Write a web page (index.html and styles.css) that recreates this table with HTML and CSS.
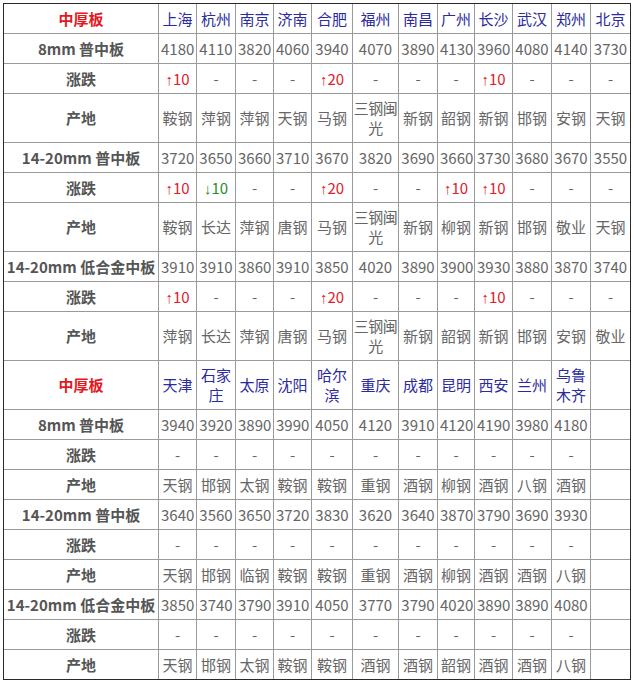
FILE: index.html
```html
<!DOCTYPE html>
<html lang="zh-CN">
<head>
<meta charset="utf-8">
<title>中厚板价格</title>
<link rel="stylesheet" href="styles.css">
</head>
<body>
<table class="price">
<colgroup>
<col class="w155"><col class="w38"><col class="w39"><col class="w38"><col class="w38"><col class="w41"><col class="w46"><col class="w39"><col class="w37"><col class="w38"><col class="w39"><col class="w39"><col class="w39">
</colgroup>
<tbody>
<tr><td class="hd">中厚板</td><td class="city">上海</td><td class="city">杭州</td><td class="city">南京</td><td class="city">济南</td><td class="city">合肥</td><td class="city">福州</td><td class="city">南昌</td><td class="city">广州</td><td class="city">长沙</td><td class="city">武汉</td><td class="city">郑州</td><td class="city">北京</td></tr>
<tr><td class="lbl">8mm 普中板</td><td>4180</td><td>4110</td><td>3820</td><td>4060</td><td>3940</td><td>4070</td><td>3890</td><td>4130</td><td>3960</td><td>4080</td><td>4140</td><td>3730</td></tr>
<tr><td class="lbl">涨跌</td><td class="up"><span class="ar">↑</span>10</td><td>-</td><td>-</td><td>-</td><td class="up"><span class="ar">↑</span>20</td><td>-</td><td>-</td><td>-</td><td class="up"><span class="ar">↑</span>10</td><td>-</td><td>-</td><td>-</td></tr>
<tr class="tall"><td class="lbl">产地</td><td>鞍钢</td><td>萍钢</td><td>萍钢</td><td>天钢</td><td>马钢</td><td class="tight">三钢闽<br>光</td><td>新钢</td><td>韶钢</td><td>新钢</td><td>邯钢</td><td>安钢</td><td>天钢</td></tr>
<tr><td class="lbl">14-20mm 普中板</td><td>3720</td><td>3650</td><td>3660</td><td>3710</td><td>3670</td><td>3820</td><td>3690</td><td>3660</td><td>3730</td><td>3680</td><td>3670</td><td>3550</td></tr>
<tr><td class="lbl">涨跌</td><td class="up"><span class="ar">↑</span>10</td><td class="down"><span class="ar">↓</span>10</td><td>-</td><td>-</td><td class="up"><span class="ar">↑</span>20</td><td>-</td><td>-</td><td class="up"><span class="ar">↑</span>10</td><td class="up"><span class="ar">↑</span>10</td><td>-</td><td>-</td><td>-</td></tr>
<tr class="tall"><td class="lbl">产地</td><td>鞍钢</td><td>长达</td><td>萍钢</td><td>唐钢</td><td>马钢</td><td class="tight">三钢闽<br>光</td><td>新钢</td><td>柳钢</td><td>新钢</td><td>邯钢</td><td>敬业</td><td>天钢</td></tr>
<tr><td class="lbl">14-20mm 低合金中板</td><td>3910</td><td>3910</td><td>3860</td><td>3910</td><td>3850</td><td>4020</td><td>3890</td><td>3900</td><td>3930</td><td>3880</td><td>3870</td><td>3740</td></tr>
<tr><td class="lbl">涨跌</td><td class="up"><span class="ar">↑</span>10</td><td>-</td><td>-</td><td>-</td><td class="up"><span class="ar">↑</span>20</td><td>-</td><td>-</td><td>-</td><td class="up"><span class="ar">↑</span>10</td><td>-</td><td>-</td><td>-</td></tr>
<tr class="tall"><td class="lbl">产地</td><td>萍钢</td><td>长达</td><td>萍钢</td><td>唐钢</td><td>马钢</td><td class="tight">三钢闽<br>光</td><td>新钢</td><td>韶钢</td><td>新钢</td><td>邯钢</td><td>安钢</td><td>敬业</td></tr>
<tr class="tall"><td class="hd">中厚板</td><td class="city">天津</td><td class="city">石家<br>庄</td><td class="city">太原</td><td class="city">沈阳</td><td class="city">哈尔<br>滨</td><td class="city">重庆</td><td class="city">成都</td><td class="city">昆明</td><td class="city">西安</td><td class="city">兰州</td><td class="city">乌鲁<br>木齐</td><td></td></tr>
<tr><td class="lbl">8mm 普中板</td><td>3940</td><td>3920</td><td>3890</td><td>3990</td><td>4050</td><td>4120</td><td>3910</td><td>4120</td><td>4190</td><td>3980</td><td>4180</td><td></td></tr>
<tr><td class="lbl">涨跌</td><td>-</td><td>-</td><td>-</td><td>-</td><td>-</td><td>-</td><td>-</td><td>-</td><td>-</td><td>-</td><td>-</td><td></td></tr>
<tr><td class="lbl">产地</td><td>天钢</td><td>邯钢</td><td>太钢</td><td>鞍钢</td><td>鞍钢</td><td>重钢</td><td>酒钢</td><td>柳钢</td><td>酒钢</td><td>八钢</td><td>酒钢</td><td></td></tr>
<tr><td class="lbl">14-20mm 普中板</td><td>3640</td><td>3560</td><td>3650</td><td>3720</td><td>3830</td><td>3620</td><td>3640</td><td>3870</td><td>3790</td><td>3690</td><td>3930</td><td></td></tr>
<tr><td class="lbl">涨跌</td><td>-</td><td>-</td><td>-</td><td>-</td><td>-</td><td>-</td><td>-</td><td>-</td><td>-</td><td>-</td><td>-</td><td></td></tr>
<tr><td class="lbl">产地</td><td>天钢</td><td>邯钢</td><td>临钢</td><td>鞍钢</td><td>鞍钢</td><td>重钢</td><td>酒钢</td><td>柳钢</td><td>酒钢</td><td>酒钢</td><td>八钢</td><td></td></tr>
<tr><td class="lbl">14-20mm 低合金中板</td><td>3850</td><td>3740</td><td>3790</td><td>3910</td><td>4050</td><td>3770</td><td>3790</td><td>4020</td><td>3890</td><td>3890</td><td>4080</td><td></td></tr>
<tr><td class="lbl">涨跌</td><td>-</td><td>-</td><td>-</td><td>-</td><td>-</td><td>-</td><td>-</td><td>-</td><td>-</td><td>-</td><td>-</td><td></td></tr>
<tr><td class="lbl">产地</td><td>天钢</td><td>邯钢</td><td>太钢</td><td>鞍钢</td><td>鞍钢</td><td>酒钢</td><td>酒钢</td><td>韶钢</td><td>酒钢</td><td>酒钢</td><td>八钢</td><td></td></tr>
</tbody>
</table>
</body>
</html>
```

FILE: styles.css
```css
html, body {
  margin: 0;
  padding: 0;
  background: #ffffff;
}
body {
  padding: 3px;
  font-family: "Noto Sans CJK SC", "Noto Sans", sans-serif;
  font-size: 15px;
  color: #666666;
}
.price {
  border-collapse: separate;
  border-spacing: 0;
  border: 1px solid #2a2a2a;
  table-layout: fixed;
  width: 628px;
}
.price td {
  box-sizing: border-box;
  border-right: 1px solid #9a9a9a;
  border-bottom: 1px solid #9a9a9a;
  padding: 4px 2px;
  line-height: 19px;
  height: 30px;
  text-align: center;
  vertical-align: middle;
  overflow: hidden;
  white-space: nowrap;
}
.price td:last-child { border-right: 0; }
.price tr.tall td { height: 49px; line-height: 20px; }
.price tr:last-child td { border-bottom: 0; height: 29px; }
.price td.tight {
  padding-left: 0;
  padding-right: 0;
  letter-spacing: -0.5px;
}
.w155 { width: 155px; }
.w46 { width: 46px; }
.w41 { width: 41px; }
.w39 { width: 39px; }
.w38 { width: 38px; }
.w37 { width: 37px; }
.price td.lbl {
  font-weight: bold;
  color: #555555;
}
.price td.hd {
  font-weight: bold;
  color: #e3191e;
}
.price td.city {
  color: #2b2b9e;
}
.price td.up { color: #e0202a; }
.price td.down { color: #2f8a2f; }
.ar {
  font-family: "Liberation Sans", sans-serif;
}
```
